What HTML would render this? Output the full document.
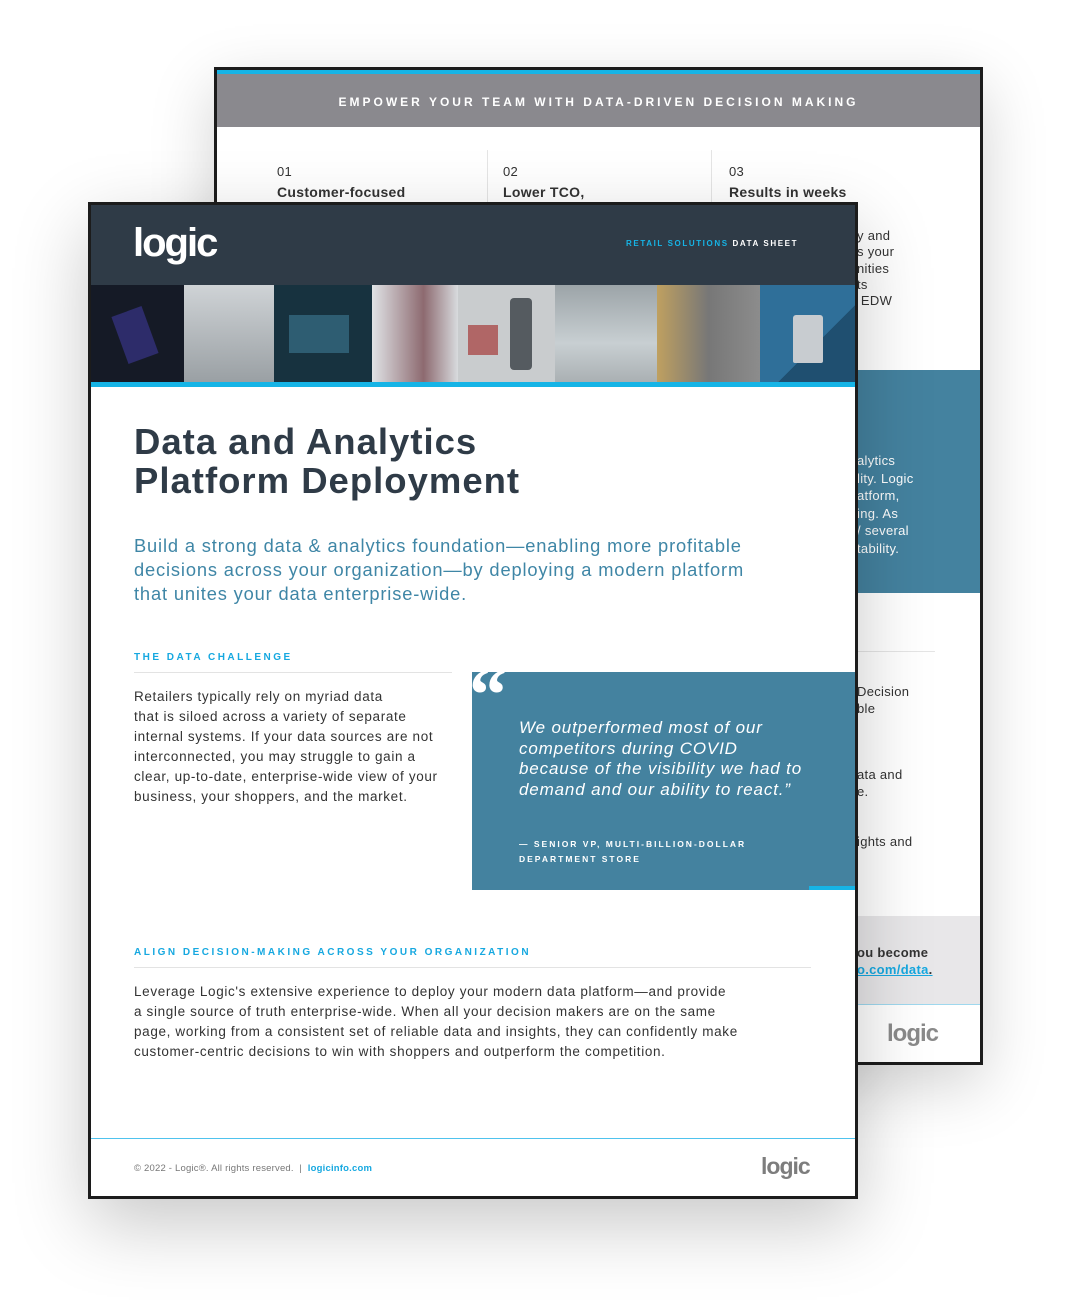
<!DOCTYPE html>
<html><head><meta charset="utf-8"><style>
*{margin:0;padding:0;box-sizing:border-box}
body{width:1071px;height:1311px;background:#fff;position:relative;overflow:hidden;font-family:"Liberation Sans",sans-serif}
.a{position:absolute;white-space:nowrap}
.back{left:214px;top:67px;width:769px;height:998px;border:3px solid #1c1c1c;background:#fff;box-shadow:0 20px 60px rgba(0,0,0,.18)}
.front{left:88px;top:202px;width:770px;height:997px;border:3px solid #1c1c1c;background:#fff;box-shadow:0 25px 70px rgba(0,0,0,.22)}
.t{color:#333;font-size:13px;letter-spacing:.3px}
.cap{font-weight:900;letter-spacing:2.5px;font-size:10px}
</style></head><body>
<div class="a back">
 <div class="a" style="left:0;top:0;width:763px;height:4px;background:#16b4e6"></div>
 <div class="a" style="left:0;top:4px;width:763px;height:53px;background:#8a898e"></div>
 <div class="a cap" style="left:0;top:25px;width:763px;text-align:center;color:#fff;font-size:12px;letter-spacing:3px">EMPOWER YOUR TEAM WITH DATA-DRIVEN DECISION MAKING</div>
 <div class="a" style="left:270px;top:80px;width:1px;height:60px;background:#e5e5e5"></div>
 <div class="a" style="left:494px;top:80px;width:1px;height:60px;background:#e5e5e5"></div>
 <div class="a t" style="left:60px;top:94px">01</div>
 <div class="a t" style="left:60px;top:114px;font-weight:bold;font-size:14px">Customer-focused</div>
 <div class="a t" style="left:286px;top:94px">02</div>
 <div class="a t" style="left:286px;top:114px;font-weight:bold;font-size:14px">Lower TCO,</div>
 <div class="a t" style="left:512px;top:94px">03</div>
 <div class="a t" style="left:512px;top:114px;font-weight:bold;font-size:14px">Results in weeks</div>
 <div class="a t" style="left:640px;top:158px;line-height:16.3px">y and<br>s your<br>nities<br>ts<br>&nbsp;EDW</div>
 <div class="a" style="left:638px;top:300px;width:125px;height:223px;background:#44829f"></div>
 <div class="a t" style="left:640px;top:382px;line-height:17.5px;color:#fff">alytics<br>lity. Logic<br>atform,<br>ing. As<br>/ several<br>tability.</div>
 <div class="a" style="left:638px;top:581px;width:80px;height:1px;background:#e5e5e5"></div>
 <div class="a t" style="left:640px;top:614px;line-height:16.5px">Decision<br>ble</div>
 <div class="a t" style="left:640px;top:697px;line-height:16.5px">ata and<br>e.</div>
 <div class="a t" style="left:640px;top:764px">ights and</div>
 <div class="a" style="left:0;top:846px;width:763px;height:88px;background:#e8e7e9"></div>
 <div class="a" style="left:0;top:934px;width:763px;height:1px;background:#9fd8ee"></div>
 <div class="a t" style="left:640px;top:875px;font-weight:bold">ou become</div>
 <div class="a t" style="left:640px;top:892px;font-weight:bold;color:#16a8e0;text-decoration:underline">o.com/data<span style="color:#333;text-decoration:none">.</span></div>
 <div class="a" style="left:670px;top:950px;font-size:24px;font-weight:bold;color:#8a8a8a;letter-spacing:-1px">logic</div>
</div>

<div class="a front">
 <div class="a" style="left:0;top:0;width:764px;height:80px;background:#2f3b47"></div>
 <div class="a" style="left:42px;top:16px;font-size:40px;color:#fff;letter-spacing:-2px;font-weight:bold">logic</div>
 <div class="a cap" style="left:535px;top:34px;font-size:8px;letter-spacing:1.6px;color:#16b4e6">RETAIL SOLUTIONS <span style="color:#fff">DATA SHEET</span></div>
 <div class="a" style="left:0;top:80px;width:764px;height:97px;display:flex">
  <div style="width:93px;background:#151a26;position:relative"><div class="a" style="left:28px;top:25px;width:32px;height:50px;background:#2d2c6a;transform:rotate(-20deg)"></div></div>
  <div style="width:90px;background:linear-gradient(#cfd3d6,#9aa0a4)"></div>
  <div style="width:98px;background:#17323f;position:relative"><div class="a" style="left:15px;top:30px;width:60px;height:38px;background:#3e7a94;opacity:.6"></div></div>
  <div style="width:86px;background:linear-gradient(90deg,#e0e3e6,#8d6a70 60%,#d8dbde)"></div>
  <div style="width:97px;background:#c9ccce;position:relative"><div class="a" style="left:52px;top:13px;width:22px;height:72px;background:#555b60;border-radius:4px"></div><div class="a" style="left:10px;top:40px;width:30px;height:30px;background:#a53a3a;opacity:.7"></div></div>
  <div style="width:102px;background:linear-gradient(#9ca4a8,#c8cfd2 60%,#aab0b3)"></div>
  <div style="width:103px;background:linear-gradient(90deg,#bfa060,#777 50%,#8c8c8c)"></div>
  <div style="flex:1;background:linear-gradient(135deg,#2f6f99 60%,#1f4f70 60%);position:relative"><div class="a" style="left:33px;top:30px;width:30px;height:48px;background:#c8ccd0;border-radius:3px 3px 2px 2px"></div></div>
 </div>
 <div class="a" style="left:0;top:177px;width:764px;height:5px;background:#16b4e6"></div>
 <div class="a" style="left:43px;top:217px;font-size:36.5px;line-height:39px;font-weight:bold;color:#2f3b47;letter-spacing:1px">Data and Analytics<br>Platform Deployment</div>
 <div class="a" style="left:43px;top:329px;font-size:18.3px;line-height:24px;color:#3f86a6;letter-spacing:.85px">Build a strong data &amp; analytics foundation—enabling more profitable<br>decisions across your organization—by deploying a modern platform<br>that unites your data enterprise-wide.</div>
 <div class="a cap" style="left:43px;top:447px;color:#16a8e0">THE DATA CHALLENGE</div>
 <div class="a" style="left:43px;top:467px;width:318px;height:1px;background:#e3e3e3"></div>
 <div class="a t" style="left:43px;top:482px;line-height:20px;font-size:13.5px;letter-spacing:.65px">Retailers typically rely on myriad data<br>that is siloed across a variety of separate<br>internal systems. If your data sources are not<br>interconnected, you may struggle to gain a<br>clear, up-to-date, enterprise-wide view of your<br>business, your shoppers, and the market.</div>
 <div class="a" style="left:381px;top:467px;width:383px;height:218px;background:#44829f"></div>
 <div class="a" style="left:718px;top:681px;width:46px;height:4px;background:#16b4e6"></div>
 <div class="a" style="left:378px;top:452px;font-size:76px;line-height:76px;font-weight:bold;color:#fff;font-family:'Liberation Serif',serif">“</div>
 <div class="a" style="left:428px;top:513px;font-size:17px;line-height:20.5px;color:#fff;font-style:italic;letter-spacing:.85px">We outperformed most of our<br>competitors during COVID<br>because of the visibility we had to<br>demand and our ability to react.”</div>
 <div class="a cap" style="left:428px;top:632px;color:#fff;font-size:8.5px;line-height:15px;letter-spacing:2px">— SENIOR VP, MULTI-BILLION-DOLLAR<br>DEPARTMENT STORE</div>
 <div class="a cap" style="left:43px;top:742px;color:#16a8e0">ALIGN DECISION-MAKING ACROSS YOUR ORGANIZATION</div>
 <div class="a" style="left:43px;top:762px;width:677px;height:1px;background:#e3e3e3"></div>
 <div class="a t" style="left:43px;top:777px;line-height:20px;font-size:13.5px;letter-spacing:.65px">Leverage Logic's extensive experience to deploy your modern data platform—and provide<br>a single source of truth enterprise-wide. When all your decision makers are on the same<br>page, working from a consistent set of reliable data and insights, they can confidently make<br>customer-centric decisions to win with shoppers and outperform the competition.</div>
 <div class="a" style="left:0;top:933px;width:764px;height:1px;background:#4fc3ee"></div>
 <div class="a" style="left:43px;top:958px;font-size:9.5px;color:#777;letter-spacing:.2px">© 2022 - Logic®. All rights reserved. &nbsp;| &nbsp;<b style="color:#16a8e0">logicinfo.com</b></div>
 <div class="a" style="left:670px;top:948px;font-size:23px;font-weight:bold;color:#7d7d7d;letter-spacing:-1px">logic</div>
</div>
</body></html>
